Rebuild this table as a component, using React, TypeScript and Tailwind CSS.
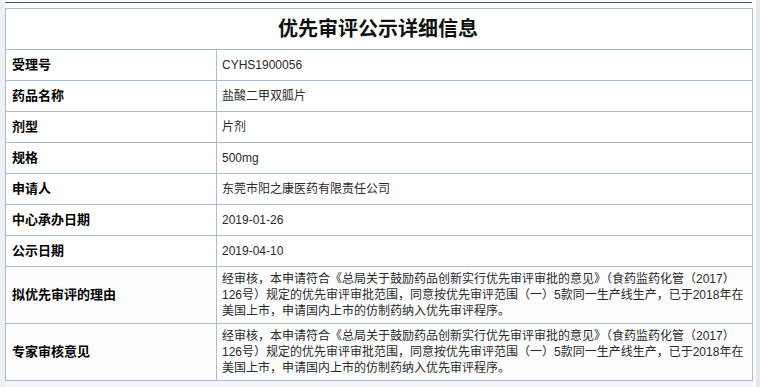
const rows: { label: string; value: string }[] = [
  { label: '受理号', value: 'CYHS1900056' },
  { label: '药品名称', value: '盐酸二甲双胍片' },
  { label: '剂型', value: '片剂' },
  { label: '规格', value: '500mg' },
  { label: '申请人', value: '东莞市阳之康医药有限责任公司' },
  { label: '中心承办日期', value: '2019-01-26' },
  { label: '公示日期', value: '2019-04-10' },
];

const opinion = [
  '经审核，本申请符合《总局关于鼓励药品创新实行优先审评审批的意见》（食药监药化管（2017）',
  '126号）规定的优先审评审批范围，同意按优先审评范围（一）5款同一生产线生产，已于2018年在',
  '美国上市，申请国内上市的仿制药纳入优先审评程序。',
];

const longRows = ['拟优先审评的理由', '专家审核意见'];

export default function App() {
  return (
    <div
      className="w-[760px] h-[387px] overflow-hidden bg-[#f4f5f9] flex"
      style={{ fontFamily: '"Liberation Sans", "Noto Sans CJK SC", sans-serif' }}
    >
      <div className="w-[5px] bg-[#eff0f4]" />
      <div className="w-[748px] flex flex-col">
        <div className="h-[8px] bg-white pt-[2px]">
          <div className="h-[1px] w-[747px] bg-[#46587a]" />
        </div>
        <div className="border-t border-l border-r border-[#a9bed5] bg-white">
          <div className="h-[41px] border-b border-[#a9bed5] flex items-center justify-center">
            <h1 className="text-[20px] font-bold text-[#111] pr-[2px]">优先审评公示详细信息</h1>
          </div>

          {rows.map(r => (
            <div key={r.label} className="h-[31px] border-b border-[#a9bed5] flex">
              <div className="w-[211px] border-r border-[#a9bed5] pl-[6px] flex items-center text-[13px] font-bold text-black">
                {r.label}
              </div>
              <div className="flex-1 pl-[5px] flex items-center text-[12px] text-[#2a2a2a]">
                {r.value}
              </div>
            </div>
          ))}

          {longRows.map(label => (
            <div key={label} className="h-[57px] border-b border-[#a9bed5] flex bg-[#fdfdfe]">
              <div className="w-[211px] border-r border-[#a9bed5] pl-[6px] flex items-center text-[13px] font-bold text-black">
                {label}
              </div>
              <div className="flex-1 pl-[5px] flex flex-col justify-center text-[12px] leading-[16px] text-[#2a2a2a]">
                {opinion.map(line => (
                  <span key={line} className="whitespace-nowrap">{line}</span>
                ))}
              </div>
            </div>
          ))}
        </div>
      </div>
      <div className="flex-1 flex">
        <div className="w-[3px] bg-white" />
        <div className="flex-1 bg-[#e7e8ed]" />
      </div>
    </div>
  );
}
